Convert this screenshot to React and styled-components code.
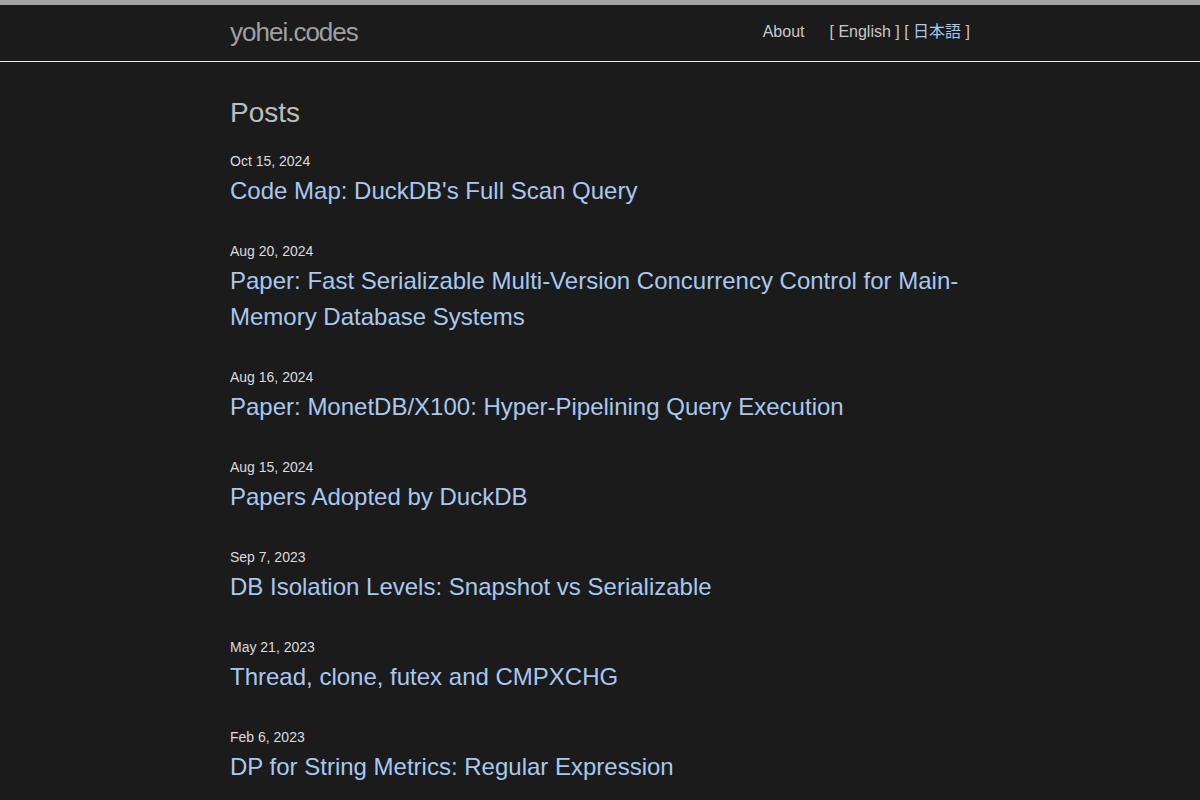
import React from "react";
import styled, { createGlobalStyle } from "styled-components";

const GlobalStyle = createGlobalStyle`
  html, body {
    margin: 0;
    padding: 0;
    background: #1b1b1c;
  }
  body {
    font-family: "Liberation Sans", Arial, "Noto Sans CJK JP", sans-serif;
    font-size: 16px;
    color: #dddddd;
  }
`;

const posts = [
  { date: "Oct 15, 2024", title: "Code Map: DuckDB's Full Scan Query" },
  {
    date: "Aug 20, 2024",
    title: "Paper: Fast Serializable Multi-Version Concurrency Control for Main-Memory Database Systems",
  },
  { date: "Aug 16, 2024", title: "Paper: MonetDB/X100: Hyper-Pipelining Query Execution" },
  { date: "Aug 15, 2024", title: "Papers Adopted by DuckDB" },
  { date: "Sep 7, 2023", title: "DB Isolation Levels: Snapshot vs Serializable" },
  { date: "May 21, 2023", title: "Thread, clone, futex and CMPXCHG" },
  { date: "Feb 6, 2023", title: "DP for String Metrics: Regular Expression" },
];

export default function App() {
  return (
    <>
      <GlobalStyle />
      <Header>
        <Wrapper>
          <SiteTitle href="#">yohei.codes</SiteTitle>
          <Nav>
            <NavLink href="#">About</NavLink>
            <Lang>
              [ English ] [ <LangLink href="#">日本語</LangLink> ]
            </Lang>
          </Nav>
        </Wrapper>
      </Header>
      <Main>
        <Content>
          <Heading>Posts</Heading>
          <PostList>
            {posts.map((p) => (
              <li key={p.date + p.title}>
                <Meta>{p.date}</Meta>
                <PostTitle>
                  <a href="#">{p.title}</a>
                </PostTitle>
              </li>
            ))}
          </PostList>
        </Content>
      </Main>
    </>
  );
}

const Header = styled.header`
  border-top: 5px solid #a3a3a3;
  border-bottom: 1px solid #e8e8e8;
  box-sizing: border-box;
  height: 62px;
`;

const Wrapper = styled.div`
  max-width: 740px;
  margin: 0 auto;
  display: flex;
  align-items: flex-start;
  justify-content: space-between;
  height: 56px;
`;

const SiteTitle = styled.a`
  font-size: 26px;
  line-height: 54px;
  letter-spacing: -1px;
  color: #a0a0a0;
  text-decoration: none;
`;

const Nav = styled.nav`
  display: flex;
  align-items: center;
  gap: 25px;
  line-height: 54px;
  font-size: 16px;
  color: #c8c8c8;
`;

const NavLink = styled.a`
  color: #c8c8c8;
  text-decoration: none;
`;

const Lang = styled.span`
  color: #c8c8c8;
`;

const LangLink = styled.a`
  color: #a8c8f0;
  text-decoration: none;
`;

const Main = styled.main`
  padding: 30px 0;
`;

const Content = styled.div`
  max-width: 740px;
  margin: 0 auto;
`;

const Heading = styled.h2`
  margin: 0 0 17px;
  font-size: 28px;
  font-weight: 400;
  line-height: 42px;
  color: #bdbdbd;
`;

const PostList = styled.ul`
  list-style: none;
  margin: 0;
  padding: 0;

  li {
    margin-bottom: 32px;
  }
`;

const Meta = styled.span`
  display: block;
  font-size: 14px;
  line-height: 21px;
  color: #dcdcdc;
`;

const PostTitle = styled.h3`
  margin: 1px 0 0;
  font-size: 24px;
  font-weight: 400;
  line-height: 36px;

  a {
    color: #a8c8f0;
    text-decoration: none;
  }
`;
